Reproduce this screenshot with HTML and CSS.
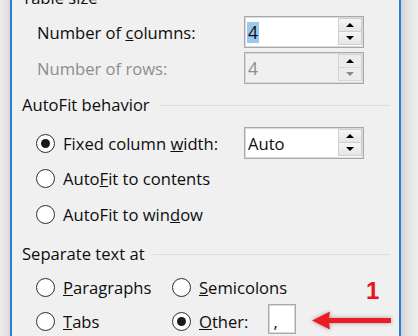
FILE: index.html
```html
<!DOCTYPE html>
<html>
<head>
<meta charset="utf-8">
<link rel="stylesheet" href="styles.css">
</head>
<body>
<div class="screen">
  <div class="shade-left"></div>
  <div class="panel">
    <div class="group-head head-table"><span>Table size</span><i class="rule"></i></div>

    <div class="field row-cols">
      <span class="label">Number of <u>c</u>olumns:</span>
      <div class="spin">
        <span class="val"><span class="sel">4</span></span>
        <div class="spin-btns"><b class="btn"><i class="up"></i></b><b class="btn"><i class="down"></i></b></div>
      </div>
    </div>

    <div class="field row-rows disabled">
      <span class="label">Number of rows:</span>
      <div class="spin">
        <span class="val">4</span>
        <div class="spin-btns"><b class="btn"><i class="up"></i></b><b class="btn"><i class="down"></i></b></div>
      </div>
    </div>

    <div class="group-head head-autofit"><span>AutoFit behavior</span><i class="rule"></i></div>

    <div class="field row-fixed">
      <span class="option"><i class="radio on"></i><span>Fixed column <u>w</u>idth:</span></span>
      <div class="spin">
        <span class="val">Auto</span>
        <div class="spin-btns"><b class="btn"><i class="up"></i></b><b class="btn"><i class="down"></i></b></div>
      </div>
    </div>

    <div class="field row-contents">
      <span class="option"><i class="radio"></i><span>Auto<u>F</u>it to contents</span></span>
    </div>

    <div class="field row-window">
      <span class="option"><i class="radio"></i><span>AutoFit to win<u>d</u>ow</span></span>
    </div>

    <div class="group-head head-separate"><span>Separate text at</span><i class="rule"></i></div>

    <div class="sep-row row-para">
      <span class="option"><i class="radio"></i><span><u>P</u>aragraphs</span></span>
      <span class="option"><i class="radio"></i><span><u>S</u>emicolons</span></span>
    </div>

    <div class="sep-row row-tabs">
      <span class="option"><i class="radio"></i><span><u>T</u>abs</span></span>
      <span class="option"><i class="radio on"></i><span><u>O</u>ther:</span><span class="other-box">,</span></span>
    </div>
  </div>
  <div class="shade-right"></div>

  <div class="annot-num">1</div>
  <svg class="annot-arrow" width="92" height="30" viewBox="0 0 92 30">
    <polygon points="6,14.5 24,5.5 23,12 85,12 85,17 23,17 24,23.5" fill="#ec1c24"/>
  </svg>
</div>
</body>
</html>
```

FILE: styles.css
```css
html, body {
  margin: 0;
  padding: 0;
}
body {
  background: #f0f0f0;
  font-family: "Open Sans", "Noto Sans", sans-serif;
  font-size: 16.6px;
  color: #0d0d0d;
}
.screen {
  position: relative;
  display: flex;
  width: 418px;
  height: 336px;
  overflow: hidden;
}
.shade-left {
  width: 10px;
  flex: none;
  background: linear-gradient(to right, #ececec, #e2e2e2 70%, #d6d6d6);
}
.panel {
  box-sizing: border-box;
  width: 391px;
  flex: none;
  border-left: 2px solid #2b7cd3;
  border-right: 2px solid #2b7cd3;
  background: #f0f0f0;
  padding: 0 9px 0 10px;
  display: flex;
  flex-direction: column;
}
.shade-right {
  flex: 1;
  background: linear-gradient(to right, #d4d4d4, #e3e3e3 40%, #eeeeee);
}

/* group headings */
.group-head {
  display: flex;
  align-items: center;
  gap: 9px;
  height: 22px;
  line-height: 22px;
  flex: none;
}
.rule {
  flex: 1;
  height: 1px;
  background: #dcdcdc;
}
.head-table { margin-top: -13px; }
.head-autofit { margin-top: 10px; }
.head-separate { margin-top: 13px; gap: 8px; }

/* rows */
.field {
  display: grid;
  grid-template-columns: 207px 120px;
  align-items: center;
  height: 32px;
  padding-left: 15px;
  flex: none;
}
.row-cols { margin-top: 7px; }
.row-rows { margin-top: 4px; }
.row-fixed { margin-top: 11px; }
.row-contents { margin-top: 3px; }
.row-window { margin-top: 4px; }

.disabled .label,
.disabled .val {
  color: #8d8d8d;
}

/* spin boxes */
.spin {
  box-sizing: border-box;
  display: flex;
  height: 32px;
  border: 1px solid #a9a9a9;
  box-shadow: inset 0 0 0 1px #dadada;
  background: #fff;
}
.disabled .spin {
  background: #f0f0f0;
}
.spin .val {
  flex: 1;
  display: flex;
  align-items: center;
  padding-left: 3px;
}
.row-cols .val,
.row-rows .val {
  font-size: 17.5px;
}
.sel {
  background: #99c9ef;
  line-height: 21px;
  padding: 0 1px;
  margin-left: -1px;
}
.spin-btns {
  width: 24px;
  display: flex;
  flex-direction: column;
  padding: 1px 1px 2px 0;
}
.btn {
  flex: 1;
  display: flex;
  align-items: center;
  justify-content: center;
  border: 1px solid #cfcfcf;
  background: linear-gradient(#f6f6f6, #e6e6e6);
}
.btn + .btn {
  border-top: none;
}
.disabled .btn {
  background: #ececec;
  border-color: #d6d6d6;
}
.up, .down {
  width: 0;
  height: 0;
  border-left: 4.5px solid transparent;
  border-right: 4.5px solid transparent;
}
.up { border-bottom: 4.5px solid #000; }
.down { border-top: 4.5px solid #000; }
.disabled .down { border-top-color: #8a8a8a; }

/* radios */
.option {
  display: flex;
  align-items: center;
  gap: 8px;
}
.radio {
  box-sizing: border-box;
  width: 19px;
  height: 19px;
  margin-left: -1px;
  border-radius: 50%;
  border: 1.8px solid #2e2e2e;
  background: #fff;
  display: flex;
  align-items: center;
  justify-content: center;
  flex: none;
}
.radio.on::after {
  content: "";
  width: 9px;
  height: 9px;
  border-radius: 50%;
  background: #1a1a1a;
}

/* separate text section */
.sep-row {
  display: grid;
  grid-template-columns: 136px auto;
  align-items: center;
  height: 32px;
  padding-left: 15px;
  flex: none;
}
.row-para { margin-top: 6px; }
.row-tabs { margin-top: 1px; }
.other-box {
  box-sizing: border-box;
  width: 28px;
  height: 30px;
  margin-left: 12px;
  margin-bottom: 4px;
  border: 1px solid #a9a9a9;
  box-shadow: inset 0 0 0 1px #dadada;
  background: #fff;
  display: flex;
  align-items: flex-end;
  padding: 0 0 2px 4px;
  line-height: 18px;
}

/* annotations */
.annot-num {
  position: absolute;
  left: 366px;
  top: 279px;
  font-family: "Liberation Sans", Arial, sans-serif;
  font-weight: bold;
  font-size: 24px;
  line-height: 24px;
  color: #e8141c;
}
.annot-arrow {
  position: absolute;
  left: 306px;
  top: 306px;
  filter: drop-shadow(0 0 2px rgba(0, 0, 0, 0.35));
}
```
